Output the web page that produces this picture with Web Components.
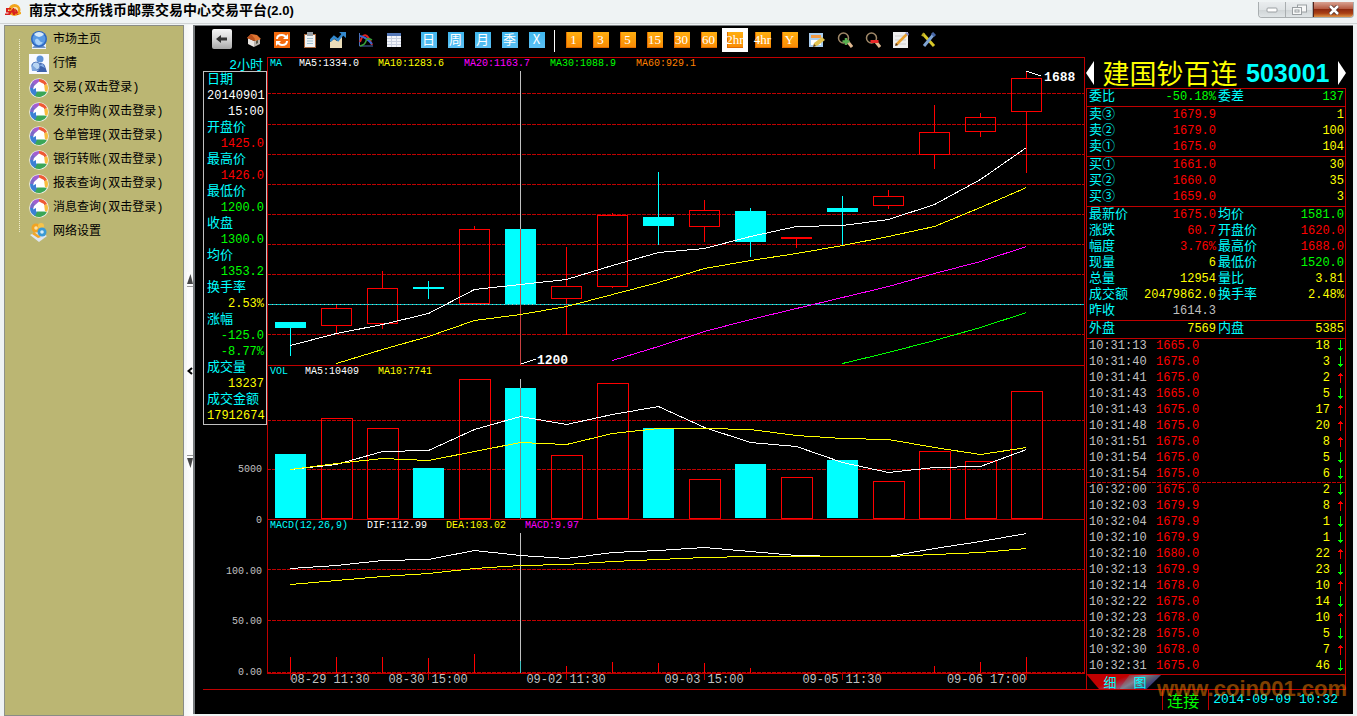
<!DOCTYPE html>
<html lang="zh-CN">
<head>
<meta charset="utf-8">
<title>南京文交所钱币邮票交易中心交易平台(2.0)</title>
<style>
html,body{height:100%;margin:0}
body{background:#eff3f4;overflow:hidden;
 --cjk:"Noto Sans CJK SC",sans-serif;
 --mix:"Liberation Mono","Noto Sans CJK SC",monospace;
 --red:#c00000;--hot:#ff0000;--cyan:#00ffff;--yel:#ffff00;--grn:#00ff00;--mag:#ff00ff;--gray:#c0c0c0}
</style>
</head>
<body>
<trade-window></trade-window>
<script>
const define=(name,html,init)=>{
  const t=document.createElement('template');t.innerHTML=html;
  customElements.define(name,class extends HTMLElement{
    constructor(){super();this.attachShadow({mode:'open'}).append(t.content.cloneNode(true));}
    connectedCallback(){if(init&&!this.ready){this.ready=true;init(this,this.shadowRoot);}}
  });
};

/* ---------- title bar ---------- */
define('title-bar',`<style>
:host{display:flex;align-items:flex-start;border-bottom:1px solid #d0d4d5;margin-bottom:1px;box-sizing:border-box;padding:0 3px 0 5px;height:24px}
svg{display:block}
.logo{margin:3px 8px 0 0}
h1{margin:0;flex:1;font:bold 14px/20px "Liberation Sans",var(--cjk);color:#000;white-space:nowrap}
h1 span{font-size:13px}
.ctl{display:flex;border:1px solid #a9aeb0;border-top:0;border-radius:0 0 4px 4px;overflow:hidden;margin-top:2px}
button{border:0;padding:0;margin:0;height:15px;width:27px;display:grid;place-items:center;background:linear-gradient(#e9ecee,#dfe3e5 50%,#cfd4d6 51%,#dfe4e6);border-right:1px solid #a9aeb0}
button:last-child{width:40px;border-right:0;border-left:1px solid #54221a;background:linear-gradient(#d9a292,#b55a41 45%,#8e2a10 50%,#a93f14 75%,#dd9446)}
</style>
<svg class="logo" width="16" height="15" viewBox="0 0 16 15"><circle cx="9.500" cy="7" r="6" fill="#f2a41c"/><circle cx="10" cy="7" r="3" fill="#fbe6c0"/><circle cx="10" cy="7" r="1.500" fill="#c8641a"/><path d="M1 5h5v1.500H3V8h3l2-3h1l1 4 1-2h1l2 5h-2l-1-2-1 2H8L7 9l-2 3H0v-1.500h3.500V9.500H1z" fill="#d8201c"/><path d="M12 10l4-1v2l-3 1z" fill="#f2a41c"/></svg>
<h1>南京文交所钱币邮票交易中心交易平台<span>(2.0)</span></h1>
<div class="ctl">
<button aria-label="最小化"><svg width="12" height="6"><rect x="1" y="1" width="10" height="4" rx="1" fill="#fff" stroke="#9a9fa2"/></svg></button>
<button aria-label="还原"><svg width="17" height="12"><rect x="6.500" y="1" width="9" height="7" fill="#f7f8f8" stroke="#9a9fa2"/><rect x="1.500" y="3.500" width="9" height="7" fill="#f7f8f8" stroke="#9a9fa2"/><rect x="4" y="6" width="4" height="2" fill="none" stroke="#9a9fa2"/></svg></button>
<button aria-label="关闭"><svg width="12" height="10"><path d="M2 1l8 8M10 1L2 9" stroke="#4a2a24" stroke-width="4"/><path d="M2 1l8 8M10 1L2 9" stroke="#fff" stroke-width="2.500"/></svg></button>
</div>`);

/* ---------- navigation tree ---------- */
const wheel=`<svg width="20" height="20" viewBox="0 0 20 20"><circle cx="10" cy="10" r="9.800" fill="#f2f3f0"/><path d="M10 10L3 4A9 9 0 0 1 10 1z" fill="#a35fd0"/><path d="M10 10L10 1A9 9 0 0 1 18 6z" fill="#ee5a34"/><path d="M10 10L18 6A9 9 0 0 1 18 14z" fill="#f8bd3c"/><path d="M10 10L17.800 14.500A9 9 0 0 1 5 17.500z" fill="#3aa657"/><path d="M10 10L6 18A9 9 0 0 1 1 10z" fill="#3c80d4"/><path d="M10 10L1 10A9 9 0 0 1 3.500 4z" fill="#7b68c8"/><path d="M10 3.500l5 2.500 1 7.500H7V10L4 11.500 5 8z" fill="#fff"/></svg>`;
const navIcons={
 home:`<svg width="20" height="20" viewBox="0 0 20 20"><path d="M3 14h14v5H3z" fill="#eef4fb"/><path d="M6 15h8l3 3H3z" fill="#6f94c4"/><circle cx="10" cy="9" r="8" fill="#2c66c0"/><circle cx="10" cy="9" r="6.500" fill="#5a9be4"/><path d="M5 4q5-4 10 0-2 3-5 3T5 4z" fill="#d5eafc"/><path d="M6 10q2-3 4 0t4 2q-2 4-5 3t-3-5z" fill="#a8d2f8"/></svg>`,
 quote:`<svg width="20" height="20" viewBox="0 0 20 20"><path d="M0 0h20v20H0z" fill="#f8fafe"/><circle cx="11" cy="5" r="3.500" fill="#5f92d6"/><path d="M7 14q0-5 4-5t5 3l2 6H8z" fill="#3d62ac"/><circle cx="7" cy="12" r="4" fill="#b8d4f2" stroke="#5a7fc0"/><path d="M2 10l8 7H3z" fill="#7fa6dc"/><path d="M10 11l4-1 2 4z" fill="#88b0e8"/></svg>`,
 net:`<svg width="20" height="20" viewBox="0 0 20 20"><path d="M1 13l8-4 9 5-8 6z" fill="#dde6f2"/><circle cx="7" cy="6" r="4.500" fill="#f2a422"/><circle cx="12" cy="4" r="3" fill="#f7c44a"/><circle cx="13" cy="10" r="4.500" fill="#3a9ad6"/><circle cx="7" cy="6" r="1.800" fill="#fbe2a8"/><circle cx="13" cy="10" r="1.800" fill="#d3ecf8"/><path d="M3 12l6 4 3-1-7-5z" fill="#eea62c"/></svg>`};
define('nav-tree',`<style>
:host{display:block;width:178px;flex:none;background:#bbb673;border:1px solid #898c86;border-left-color:#8d9188}
ul{list-style:none;margin:0;padding:2px 0 0 24px;position:relative}
ul::before{content:"";position:absolute;left:14px;top:13px;bottom:12px;border-left:1px dotted #f2efd0}
a{display:flex;align-items:center;gap:4px;height:24px;text-decoration:none;color:#000;font:12px/16px var(--mix);white-space:nowrap}
svg{display:block}
</style><nav><ul></ul></nav>`,(el,r)=>{
 const items=[['home','市场主页'],['quote','行情'],['','交易(双击登录)'],['','发行申购(双击登录)'],['','仓单管理(双击登录)'],['','银行转账(双击登录)'],['','报表查询(双击登录)'],['','消息查询(双击登录)'],['net','网络设置']];
 r.querySelector('ul').innerHTML=items.map(([k,t])=>`<li><a href="#">${navIcons[k]||wheel}<span>${t}</span></a></li>`).join('');
});

define('split-handle',`<style>
:host{display:flex;align-items:center;width:9px;flex:none;padding-left:3px;box-sizing:border-box;background:linear-gradient(90deg,#f2f4f4,#fff)}
div{display:flex;flex-direction:column;width:6px;background:#fcfcfc}
button{height:170px;border:solid #999;border-width:1px 0;background:none;padding:0;display:grid;place-items:center}
svg{display:block;margin:2px 0}
</style><div><svg width="6" height="10"><path d="M3.500 0L6 10H0z" fill="#444"/></svg>
<button aria-label="收起侧栏"><svg width="6" height="8"><path d="M5 1L1.500 4 5 7" fill="none" stroke="#000" stroke-width="2"/></svg></button>
<svg width="6" height="10"><path d="M0 0h6L3.500 10z" fill="#444"/></svg></div>`);

/* ---------- toolbar ---------- */
const I=b=>`<svg width="16" height="16" viewBox="0 0 16 16">${b}</svg>`;
const tools={
 '首页':I('<path d="M2 6l6 3v6l-6-3z" fill="#e8e4e0"/><path d="M8 9l6-3v6l-6 3z" fill="#b9b3ad"/><path d="M1 6l4-4 6 1 4 4-5 2z" fill="#e07430"/><path d="M1 6l4-4 4 5-1 2z" fill="#b8501c"/><path d="M10 9l2-1v3l-2 1z" fill="#554"/>'),
 '刷新':I('<path d="M0 0h16v16H0z" fill="#f46a0c"/><path d="M3 7q0-4 5-4 2 0 4 2" fill="none" stroke="#fff" stroke-width="2"/><path d="M14 2v5H9z" fill="#fff"/><path d="M13 9q0 4-5 4-2 0-4-2" fill="none" stroke="#fff" stroke-width="2"/><path d="M2 14V9h5z" fill="#fff"/>'),
 '剪贴板':I('<path d="M2 2h12v14H2z" fill="#a8683c"/><path d="M3 3h10v12H3z" fill="#f2f5f6"/><path d="M5 0h6v4H5z" fill="#9aa0a6"/><path d="M5 6.500h6M5 9h6M5 11.500h6" stroke="#9fc0d0"/>'),
 '分时图':I('<path d="M0 16V10l4-3 3 2 5-5v12z" fill="#eadcb8"/><path d="M0 9l4-4 4 3 5-6" stroke="#3388cc" stroke-width="2.500" fill="none"/><path d="M9 0h7v6z" fill="#3388cc"/>'),
 '指标':I('<path d="M1.500 1v13H15" stroke="#4a6fb8" fill="none"/><path d="M2 10C5 1 9 0 14 13" stroke="#e02020" stroke-width="2" fill="none"/><path d="M2 4q6 1 12 8" stroke="#3868d0" stroke-width="2" fill="none"/><path d="M2 14q5-1 6-5t6-1" stroke="#38a038" stroke-width="1.500" fill="none"/>'),
 '报价表':I('<path d="M1 1h14v14H1z" fill="#f2f4fa"/><path d="M1 1h14v3H1z" fill="#5478b8"/><path d="M1 6.500h14M1 9.500h14M1 12.500h14M5.500 4v11M10.500 4v11" stroke="#c8d0e0" shape-rendering="crispEdges"/>'),
 '编辑':I('<path d="M0 1h14v14H0z" fill="#a8cdf0"/><path d="M2 3h10v3H2z" fill="#f29a44"/><path d="M2 8h10v5H2z" fill="#fff"/><path d="M4 15l1-4 8-6 3 3-8 6z" fill="#e2c352"/><path d="M4 15l1-3 2 2z" fill="#604020"/>'),
 '放大':I('<circle cx="6.500" cy="6" r="5" fill="none" stroke="#a08868" stroke-width="1.500"/><path d="M11 10l4 5" stroke="#e0b890" stroke-width="3"/><path d="M9 6v7M5.500 9.500h7" stroke="#58b050" stroke-width="2.500"/>'),
 '缩小':I('<circle cx="6.500" cy="6" r="5" fill="none" stroke="#a08868" stroke-width="1.500"/><path d="M11 10l4 5" stroke="#e0b890" stroke-width="3"/><path d="M5.500 9.500h8" stroke="#e82828" stroke-width="3"/>'),
 '画线':I('<path d="M0 0h15v16H0z" fill="#eeeeee"/><path d="M2 4h11M2 8h11M2 12h11" stroke="#ccc"/><path d="M3 13L14 2" stroke="#e8a030" stroke-width="2.500"/><path d="M2 14l1-3 2 2z" fill="#503018"/><path d="M12 1l2-1 2 2-1 2z" fill="#8a90c8"/>'),
 '设置':I('<path d="M2 2l11 12" stroke="#d8c828" stroke-width="3"/><path d="M13 2L3 14" stroke="#7fa4d4" stroke-width="3"/><path d="M11 1l3 3" stroke="#4868a8" stroke-width="3"/><path d="M3 1l-2 3" stroke="#b8a820" stroke-width="2"/>')};
define('tool-bar',`<style>
:host{display:flex;align-items:flex-start;height:31px;box-sizing:border-box;padding:2px 0 0 17px}
button{flex:none;border:0;padding:0;margin:0;background:none;height:24px;width:28px;display:grid;place-items:center}
svg{display:block}
.back{width:20px;height:20px;margin:1px 8px 0 0;border-radius:2px;background:linear-gradient(#f6f6f6,#cfcfcf 60%,#a8a8a8)}
.t{width:27px}
.t span{box-sizing:border-box;width:16px;height:16px;display:grid;justify-content:center;color:#fff;font:13px/14px var(--cjk);background:linear-gradient(#3fb6ee,#5cc0f4)}
.o span{font:13px/16px "Liberation Serif",serif;background:linear-gradient(#ffae10,#f98a04);box-shadow:inset 1px -1px #e06c00}
.on{background:#fff;width:26px;margin-right:1px}
.g{width:7px;flex:none}
i{flex:none;width:1px;height:22px;margin:2px 5px 0 4px;background:#fff}
</style>`,(el,r)=>{
 const ic=n=>`<button aria-label="${n}">${tools[n]}</button>`;
 const names=Object.keys(tools),d=document.createElement('template');
 d.innerHTML=`<button class="back" aria-label="返回"><svg width="12" height="10"><path d="M0 5l5-4v2.500h6v3H5V9z" fill="#333"/></svg></button>`
 +names.slice(0,6).map(ic).join('')+'<span class="g"></span>'
 +[...'日周月季X'].map(t=>`<button class="t"><span>${t}</span></button>`).join('')+'<i></i>'
 +['1','3','5','15','30','60','2hr','4hr','Y'].map(t=>`<button class="t o${t==='2hr'?' on':''}"><span>${t}</span></button>`).join('')
 +names.slice(6).map(ic).join('');
 r.append(d.content);
});

/* ---------- left column: cursor readout and value axis ---------- */
define('cursor-info',`<style>
:host{display:flex;flex-direction:column;width:64px;padding-left:8px;flex:none;font:12px/16px var(--mix)}
.p{height:14px;line-height:18px;font-size:13px;color:var(--cyan);text-align:right;padding-right:4px}
dl{margin:0;border:1px solid var(--gray);padding:0 2px 0 3px}
dt{color:var(--cyan);font-size:13px;height:16px}dd{margin:0;text-align:right;height:16px}
.axis{flex:1;display:flex;flex-direction:column;justify-content:space-between;margin:39px 5px 10px 0;color:var(--gray);font-size:10px;line-height:12px;text-align:right}
</style><div class="p">2小时</div><dl></dl>
<div class="axis"><span>5000</span><span>0</span><span>100.00</span><span>50.00</span><span>0.00</span></div>`,(el,r)=>{
 const rows=[['日期','#fff','20140901','15:00'],['开盘价','var(--hot)','1425.0'],['最高价','var(--hot)','1426.0'],['最低价','var(--grn)','1200.0'],['收盘','var(--grn)','1300.0'],['均价','var(--grn)','1353.2'],['换手率','var(--yel)','2.53%'],['涨幅','var(--grn)','-125.0','-8.77%'],['成交量','var(--yel)','13237'],['成交金额','var(--yel)','17912674']];
 r.querySelector('dl').innerHTML=rows.map(([l,c,...v])=>`<dt>${l}</dt>`+v.map(x=>`<dd style="color:${c}">${x}</dd>`).join('')).join('');
});

/* ---------- chart pane: legend and notes are slotted over the drawing ---------- */
define('chart-pane',`<style>
:host{display:grid;grid-template:minmax(0,1fr)/minmax(0,1fr);min-height:0;position:relative}
svg{grid-area:1/1;display:block;width:100%;height:100%;shape-rendering:crispEdges}
svg *{vector-effect:non-scaling-stroke}
.leg{grid-area:1/1;z-index:1;align-self:start;display:grid;justify-content:start;grid-template-columns:var(--cols);padding:1px 0 0 3px;font:10px/12px var(--mix);white-space:nowrap}
</style><svg preserveAspectRatio="none" aria-hidden="true"></svg><div class="leg"><slot></slot></div><slot name="note"></slot>`,(el,r)=>{
 r.querySelector('.leg').style.setProperty('--cols',el.getAttribute('cols'));
 const s=r.querySelector('svg'),kind=el.getAttribute('kind');
 const X=i=>290.5+46*i, H=(y,x='')=>`<path d="M267 ${y+.5}H1085" stroke="#c00000" ${x}/>`, dash='stroke-dasharray="4 1"';
 const line=(c,a,off=0)=>`<polyline fill="none" stroke="${c}" points="${a.map((y,i)=>X(i+off)+','+(y+.5)).join(' ')}"/>`;
 let o='';const box={ma:[57,308],vol:[365,154],macd:[519,154]}[kind];
 s.setAttribute('viewBox',`267 ${box[0]} 818 ${box[1]}`);
 o+=H(box[0]);
 if(kind==='ma'){
  [93,124,154,184,214,244,274,334].forEach(y=>o+=H(y,dash));
  const C=[[1,322,328,322,356],[0,308,325,305,334],[0,288,323,271,329],[1,287,289,281,299],[0,229,303,226,303],[1,229,304,229,304],[0,286,298,247,335],[0,215,286,213,288],[1,217,226,172,245],[0,210,226,200,242],[1,211,242,208,257],[2,237,239,237,248],[1,208,212,196,245],[0,196,205,190,209],[0,132,154,105,169],[0,117,131,113,137],[0,78,111,71,173]];
  C.forEach(([k,t,b,h,l],i)=>{const x=275+46*i,c=k===1?'#00ffff':'#ff0000';
   o+=`<path d="M${x+15.5} ${h}V${t}M${x+15.5} ${b}V${l}" stroke="${c}"/>`;
   o+=k?`<rect x="${x}" y="${t}" width="31" height="${b-t}" fill="${c}"/>`:`<rect x="${x+.5}" y="${t+.5}" width="30" height="${b-t}" fill="none" stroke="${c}"/>`;});
  o+='<path d="M268 304.500H1084" stroke="#00c0c0"/><path d="M268 304.500H1084" stroke="#c0c0c0" stroke-dasharray="1 3"/>';
  o+='<path d="M520.500 71V229" stroke="#c0c0c0"/><path d="M520.500 229V365" stroke="#c84040"/>';
  o+=line('#fff',[345,333,324,313,289,284,279,265,252,248,236,226,225,219,204,179,147]);
  o+=line('#ffff00',[363,349,336,320,314,306,294,282,268,260,253,245,236,226,207,187],1);
  o+=line('#ff00ff',[360,346,331,319,308,297,286,273,261,246],7);
  o+=line('#00ff00',[363,352,340,327,312],12);
  o+='<path d="M1026 71l15 5M521 364l15-5" stroke="#fff" fill="none"/>';
 }
 if(kind==='vol'){
  [420,469].forEach(y=>o+=H(y,dash));
  const T=[454,418,428,468,379,388,455,383,428,479,464,477,460,481,451,461,391],F=[0,3,5,8,10,12];
  T.forEach((t,i)=>{const x=275+46*i;o+=F.includes(i)?`<rect x="${x}" y="${t}" width="31" height="${518-t}" fill="#00ffff"/>`:`<rect x="${x+.5}" y="${t+.5}" width="31" height="${518-t}" fill="none" stroke="#ff0000"/>`;});
  o+='<path d="M520.500 379V519" stroke="#c0c0c0"/><path d="M520.500 388V519" stroke="#808080"/>';
  o+=line('#fff',[469,464,451,450,429,416,424,414,406,427,442,446,462,472,467,466,449]);
  o+=line('#ffff00',[469,463,458,460,451,442,444,433,428,428,429,435,438,439,447,454,447]);
 }
 if(kind==='macd'){
  [569,620,672].forEach(y=>o+=H(y,dash));
  [657,657,657,658,654,0,666,662,663,663,668,0,0,0,666,662,657].forEach((t,i)=>{if(t)o+=`<path d="M${X(i)} ${t}V673" stroke="#ff0000"/>`;});
  o+='<path d="M520.500 533V661" stroke="#c0c0c0"/><path d="M520.500 661V673" stroke="#40c0c0"/>';
  o+=line('#fff',[568,565,560,559,550,555,558,552,550,547,551,555,556,556,548,541,533]);
  o+=line('#ffff00',[584,580,576,573,568,565,564,561,559,557,556,556,556,556,554,552,548]);
 }
 s.innerHTML=o+`<path d="M267.500 ${box[0]}v${box[1]}M1084.500 ${box[0]}v${box[1]}" stroke="#c00000"/>`;
});

define('chart-stack',`<style>
:host{flex:1;min-width:0;display:grid;grid-template:2fr 1fr 1fr 16px/minmax(0,1fr)}
.w{color:#fff}.c{color:var(--cyan)}.y{color:var(--yel)}.m{color:var(--mag)}.g{color:var(--grn)}.o{color:#ff8000}
b{position:absolute;color:#fff;font:bold 13px/14px var(--mix)}
.hi{left:95%;top:14px}.lo{left:33%;bottom:-3px;z-index:1}
.dates{border-top:1px solid var(--red);display:grid;grid-template-columns:14fr 98fr 98fr 20fr 138fr 138fr 138fr 151fr 23fr;justify-items:center;color:var(--gray);font:12px/12px var(--mix);white-space:nowrap}
.dates>*{grid-row:1}.dates svg{grid-column:1/-1;width:100%;height:6px;shape-rendering:crispEdges}
</style>
<chart-pane kind="ma" cols="29px 79px 86px 86px 86px auto"><span class="c">MA</span><span class="w">MA5:1334.0</span><span class="y">MA10:1283.6</span><span class="m">MA20:1163.7</span><span class="g">MA30:1088.9</span><span class="o">MA60:929.1</span><b slot="note" class="hi">1688</b><b slot="note" class="lo">1200</b></chart-pane>
<chart-pane kind="vol" cols="35px 73px auto"><span class="c">VOL</span><span class="w">MA5:10409</span><span class="y">MA10:7741</span></chart-pane>
<chart-pane kind="macd" cols="97px 79px 79px auto"><span class="c">MACD(12,26,9)</span><span class="w">DIF:112.99</span><span class="y">DEA:103.02</span><span class="m">MACD:9.97</span></chart-pane>
<div class="dates"><svg viewBox="267 0 818 6" preserveAspectRatio="none" aria-hidden="true"><path d="M290.500 0v6M428.500 0v6M566.500 0v6M704.500 0v6M842.500 0v6M1026.500 0v6" stroke="#c00000"/></svg>
<span style="grid-column:2">08-29 11:30</span><span style="grid-column:3">08-30 15:00</span><span style="grid-column:5">09-02 11:30</span><span style="grid-column:6">09-03 15:00</span><span style="grid-column:7">09-05 11:30</span><span style="grid-column:8">09-06 17:00</span></div>`);

/* ---------- quote panel ---------- */
define('quote-panel',`<style>
:host{width:260px;flex:none;margin:0 7px 0 1px;display:flex;flex-direction:column;font:12px/16px var(--mix)}
header{height:31px;display:flex;align-items:center;justify-content:space-between;white-space:nowrap}
header button{border:0;background:none;padding:0;display:block}header svg{display:block}
h2{margin:0;font:27px/30px var(--cjk);color:var(--yel)}
header strong{font:bold 25px/30px "Liberation Sans",sans-serif;color:var(--cyan)}
.box{border:solid var(--red);border-width:0 1px;flex:1}
table{width:100%;table-layout:fixed;border-collapse:separate;border-spacing:0;border-top:1px solid var(--red);border-bottom:1px solid transparent}
td,th{padding:0;height:16px;font-weight:normal;text-align:right;white-space:nowrap}
th{text-align:left;padding-left:2px;color:var(--cyan);font-size:13px}
td:last-child{padding-right:1px}
.ticks{border:0;box-shadow:inset 0 1px var(--red)}
.ticks td:first-child{text-align:left;padding-left:2px;color:var(--gray)}
.ticks td:nth-child(2){text-align:left;color:var(--hot)}
.ticks td:nth-child(3){color:var(--yel)}
.ticks svg{display:block;margin-left:auto;shape-rendering:crispEdges}
.ticks tr.cut{background:repeating-linear-gradient(90deg,var(--red) 0 4px,transparent 4px 5px) top/100% 1px no-repeat}
nav{height:14px;border:solid var(--red);border-width:1px 1px 0;display:flex}
nav button{border:0;padding:0;width:46px;height:14px;color:var(--cyan);font:13px/14px var(--cjk)}
nav button:first-child{background:linear-gradient(160deg,#c00000 50%,#a04060 75%,#8080a0);clip-path:polygon(0 0,100% 0,70% 100%,26% 100%)}
nav button+button{margin-left:-14px;width:42px;background:linear-gradient(150deg,#b00000,#808090 40%,#606070 55%,#000080);clip-path:polygon(25% 0,100% 0,66% 100%,0 100%)}
</style>
<header><button aria-label="上一个"><svg width="8" height="24"><path d="M8 0v24L0 12z" fill="#fff"/></svg></button><h2>建国钞百连</h2><strong>503001</strong><button aria-label="下一个"><svg width="8" height="24"><path d="M0 0v24l8-12z" fill="#fff"/></svg></button></header>
<div class="box"></div><nav><button>细</button><button>图</button></nav>`,(el,r)=>{
 const c={r:'var(--hot)',g:'var(--grn)',y:'var(--yel)',w:'var(--gray)'};
 const cols='<colgroup><col style="width:42px"><col><col style="width:45px"><col style="width:84px"></colgroup>';
 const cell=v=>v===undefined?'<td></td>':`<td style="color:${c[v[0]]}">${v.slice(1)}</td>`;
 const tbl=rows=>`<table>${cols}${rows.map(([a,b,d,e])=>`<tr><th scope="row">${a}</th>${cell(b)}<th${d?' scope="row"':''}>${d||''}</th>${cell(e)}</tr>`).join('')}</table>`;
 const up='<svg width="7" height="12" aria-label="升"><path d="M3 1h1v10H3zM2 2h3v1H2zM1 3h5v1H1z" fill="#f00"/></svg>',dn='<svg width="7" height="12" aria-label="降"><path d="M3 0h1v11H3zM2 9h3v1H2zM1 8h5v1H1z" fill="#0f0"/></svg>';
 const ticks='31:13 1665.0 18 d|31:40 1675.0 3 d|31:41 1675.0 2 u|31:43 1665.0 5 d|31:43 1675.0 17 u|31:48 1675.0 20 u|31:51 1675.0 8 u|31:54 1675.0 5 d|31:54 1675.0 6 d|32:00 1675.0 2 d|32:03 1679.9 8 u|32:04 1679.9 1 d|32:10 1679.9 1 d|32:10 1680.0 22 u|32:13 1679.9 23 d|32:14 1678.0 10 u|32:22 1675.0 14 d|32:23 1678.0 10 u|32:28 1675.0 5 d|32:30 1678.0 7 u|32:31 1675.0 46 d'.split('|').map(x=>x.split(' '));
 r.querySelector('.box').innerHTML=
  tbl([['委比','g-50.18%','委差','g137']])
  +tbl([['卖③','r1679.9','','y1'],['卖②','r1679.0','','y100'],['卖①','r1675.0','','y104']])
  +tbl([['买①','r1661.0','','y30'],['买②','r1660.0','','y35'],['买③','r1659.0','','y3']])
  +tbl([['最新价','r1675.0','均价','g1581.0'],['涨跌','r60.7','开盘价','r1620.0'],['幅度','r3.76%','最高价','r1688.0'],['现量','y6','最低价','g1520.0'],['总量','y12954','量比','y3.81'],['成交额','y20479862.0','换手率','y2.48%'],['昨收','w1614.3']])
  +tbl([['外盘','y7569','内盘','y5385']])
  +`<table class="ticks"><colgroup><col style="width:69px"><col><col style="width:60px"><col style="width:15px"></colgroup>${ticks.map(([t,p,v,a],i)=>`<tr${i===9?' class="cut"':''}><td>10:${t}</td><td>${p}</td><td>${v}</td><td>${a==='u'?up:dn}</td></tr>`).join('')}</table>`;
});

/* ---------- status bar ---------- */
define('status-bar',`<style>
:host{display:flex;justify-content:flex-end;height:25px;box-sizing:border-box;border-top:1px solid var(--red);margin:0 7px 0 8px;position:relative;white-space:nowrap}
span{border-left:1px solid var(--red);height:20px}
.ok{color:var(--grn);font:16px/20px var(--cjk);padding:0 9px 0 4px}
.tm{color:var(--cyan);font:13px/20px var(--mix);padding:0 8px 0 4px}
.mark{position:absolute;right:-1px;top:-14px;font:bold 22px/26px "Liberation Sans",sans-serif;color:rgba(255,128,0,.5);text-decoration:none}
</style><span class="ok">连接</span><span class="tm">2014-09-09 10:32</span><a class="mark" href="#">www.coin001.com</a>`);

define('trade-window',`<style>
:host{display:flex;flex-direction:column;min-height:100vh;background:#eff3f4}
.body{flex:1;display:flex;padding-left:4px}
main{flex:1;min-width:0;display:flex;flex-direction:column;background:#000;border:solid #777b7e;border-width:1px 0 0 2px;margin:0 4px 2px 0}
.work{flex:1;display:flex}
</style><title-bar></title-bar><div class="body"><nav-tree></nav-tree><split-handle></split-handle><main><tool-bar></tool-bar><div class="work"><cursor-info></cursor-info><chart-stack></chart-stack><quote-panel></quote-panel></div><status-bar></status-bar></main></div>`);
</script>
</body>
</html>
